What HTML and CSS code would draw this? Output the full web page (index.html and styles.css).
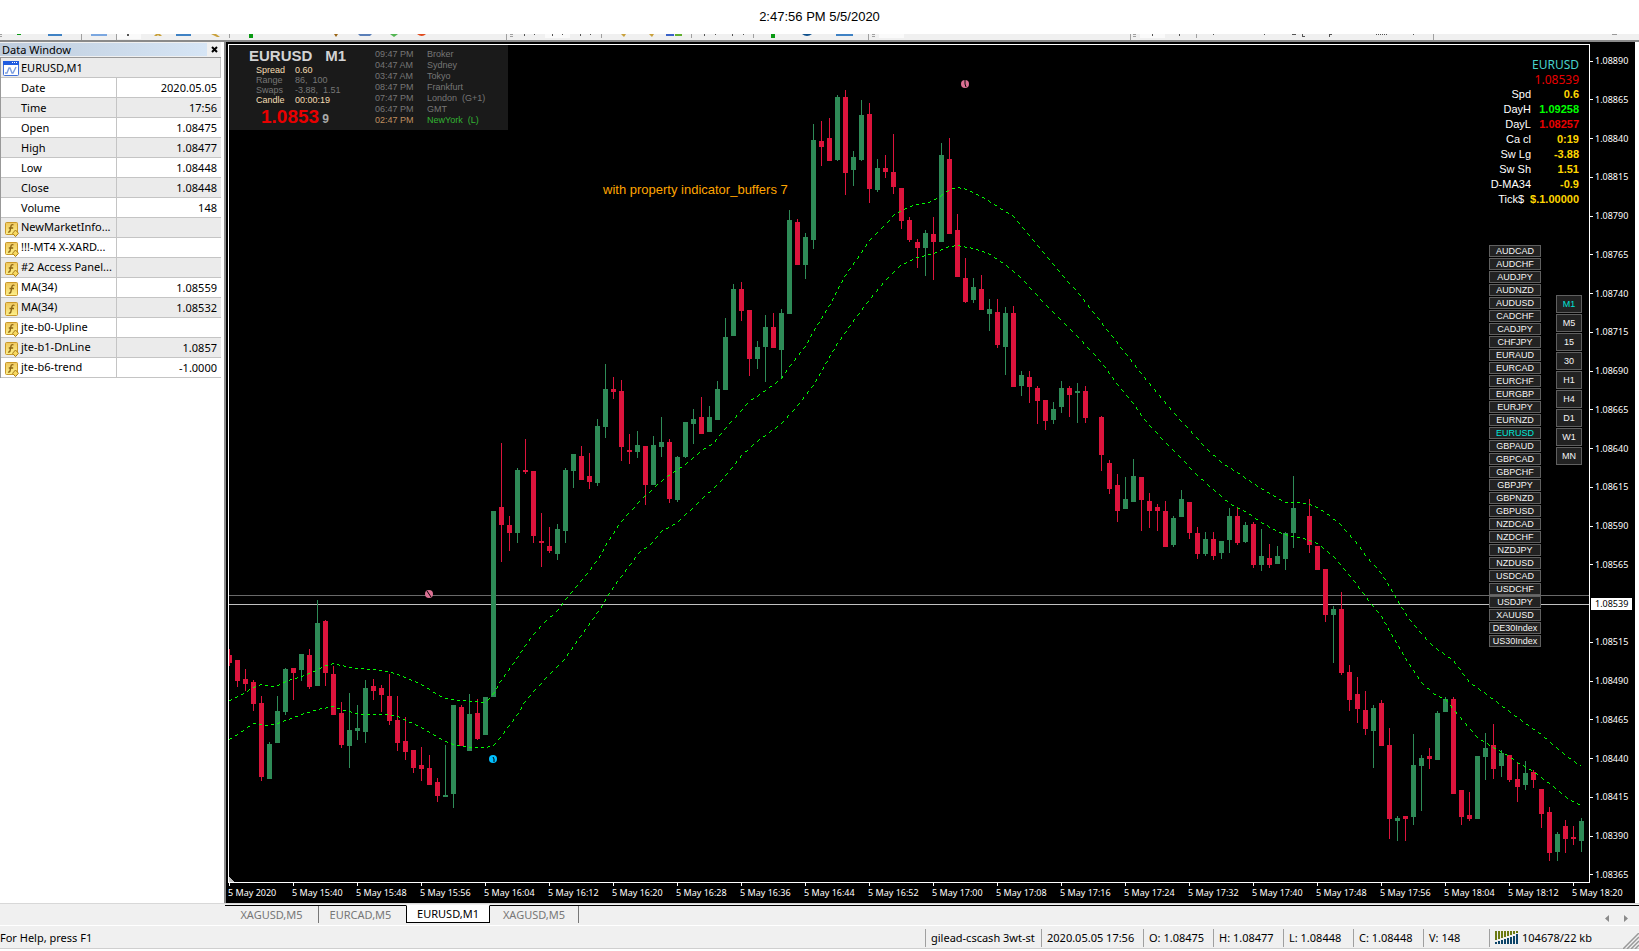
FILE: index.html
```
<!DOCTYPE html>
<html lang="en">
<head>
    <meta charset="utf-8">
    <title>EURUSD,M1</title>
    <link rel="stylesheet" href="styles.css">
</head>
<body>
    <header class="clock">2:47:56 PM 5/5/2020</header>

    <div class="toolbar">
        <svg width="1630" height="6" aria-hidden="true">
            <g fill="#a0a0a0">
                <path d="M81 0h1v6h-1zM116 0h1v6h-1zM229 0h1v4h-1zM506 0h1v6h-1zM601 0h1v4h-1zM691 0h1v4h-1zM753 0h1v4h-1zM868 0h1v6h-1zM1130 0h1v6h-1zM1196 0h1v4h-1zM1433 0h1v6h-1z"/>
                <path d="M0 0h2v1h-2zM0 2h2v1h-2zM510 0h3v1h-3zM510 2h3v1h-3zM872 0h3v1h-3zM872 2h3v1h-3zM1133 0h3v1h-3zM1133 2h3v1h-3z"/>
            </g>
            <g fill="#fafafa">
                <path d="M117 0h24v5h-24zM545 0h25v4h-25zM879 0h25v4h-25zM1140 0h25v4h-25z"/>
            </g>
            <g fill="#555">
                <path d="M127 0h2v2h-2zM524 0h1v2h-1zM534 0h1v1h-1zM552 0h1v2h-1zM562 0h1v1h-1zM580 0h1v2h-1zM590 0h1v1h-1zM704 0h1v2h-1zM715 0h1v1h-1zM732 0h1v2h-1zM743 0h1v1h-1z"/>
                <path d="M1152 0h1v2h-1zM1179 0h1v2h-1zM1213 0h1v1h-1zM1264 0h1v1h-1zM1292 0h4v1h-4zM1301 0h1v3h3v-1h-2v-2zM1329 0h3v1h-2v2h-1zM1413 0h1v1h-1z"/>
                <path d="M1376 0h1v1h-1zM1378 0h1v1h-1zM1380 0h1v1h-1zM1382 0h1v1h-1zM1384 0h1v1h-1zM1386 0h1v1h-1z"/>
            </g>
            <path d="M1612 0h5v1h-5z" fill="#999"/>
            <path d="M17 0h4v1h-4zM249 0h4v4h-4zM771 0h4v4h-4z" fill="#0a9a14"/>
            <path d="M48 0h14v2h-14zM176 0h15v2h-15zM836 0h17v2h-17z" fill="#3f82c4"/>
            <path d="M91 0h16v2h-16z" fill="#7ba7e0"/>
            <path d="M154 2l2-2h4l2 2h-3l-1-1l-1 1zM211 0h5l4 3h-3zM621 0h5l-2 3zM649 0h5l-2 3z" fill="#c9a13c"/>
            <path d="M334 0h4l-2 3z" fill="#9a6414"/>
            <path d="M358 0h14l-2 2h-10z" fill="#5a7fb8"/>
            <path d="M390 0h8l-4 3z" fill="#53b553"/>
            <path d="M417 0h9q-4 4-9 0z" fill="#e04a1c"/>
            <path d="M666 0h8v2h-8z" fill="#3a62c8"/>
            <path d="M675 0h7v2h-7z" fill="#62b030"/>
            <path d="M802 0h10q-5 4-10 0z" fill="#0d4f8b"/>
        </svg>
    </div>

    <main class="workspace">
        <section class="data-window">
            <div class="panel-title">
                <h2>Data Window</h2>
                <button class="close" aria-label="Close">
                    <svg width="7" height="7" viewBox="0 0 7 7"><path d="M1 1L6 6M6 1L1 6" stroke="#000" stroke-width="2"/></svg>
                </button>
            </div>
            <table class="values">
                <colgroup><col class="name"><col></colgroup>
                <tbody>
                    <tr>
                        <th colspan="2" scope="colgroup"><svg class="icon" width="16" height="15" viewBox="0 0 16 15"><rect x="0.5" y="0.5" width="15" height="14" rx="1" fill="#fff" stroke="#3f6fd8"/><path d="M0 0h16v4H0z" fill="#1f5be0"/><path d="M9 1h1v1H9zM11 1h1v1h-1zM13 1h1v1h-1z" fill="#fff"/><path d="M2 12h2l2-5h1l2 5h1l3-6" fill="none" stroke="#7e9fe0" stroke-width="1.4"/></svg>EURUSD,M1</th>
                    </tr>
                    <tr><th scope="row" class="plain">Date</th><td>2020.05.05</td></tr>
                    <tr><th scope="row" class="plain">Time</th><td>17:56</td></tr>
                    <tr><th scope="row" class="plain">Open</th><td>1.08475</td></tr>
                    <tr><th scope="row" class="plain">High</th><td>1.08477</td></tr>
                    <tr><th scope="row" class="plain">Low</th><td>1.08448</td></tr>
                    <tr><th scope="row" class="plain">Close</th><td>1.08448</td></tr>
                    <tr><th scope="row" class="plain">Volume</th><td>148</td></tr>
                    <tr><th scope="row"><svg class="icon" width="16" height="16"><use href="#fx-custom"/></svg>NewMarketInfo...</th><td></td></tr>
                    <tr><th scope="row"><svg class="icon" width="16" height="16"><use href="#fx-custom"/></svg>!!!-MT4 X-XARD...</th><td></td></tr>
                    <tr><th scope="row"><svg class="icon" width="16" height="16"><use href="#fx-custom"/></svg>#2 Access Panel...</th><td></td></tr>
                    <tr><th scope="row"><svg class="icon" width="16" height="16"><use href="#fx"/></svg>MA(34)</th><td>1.08559</td></tr>
                    <tr><th scope="row"><svg class="icon" width="16" height="16"><use href="#fx"/></svg>MA(34)</th><td>1.08532</td></tr>
                    <tr><th scope="row"><svg class="icon" width="16" height="16"><use href="#fx-custom"/></svg>jte-b0-Upline</th><td></td></tr>
                    <tr><th scope="row"><svg class="icon" width="16" height="16"><use href="#fx-custom"/></svg>jte-b1-DnLine</th><td>1.0857</td></tr>
                    <tr><th scope="row"><svg class="icon" width="16" height="16"><use href="#fx-custom"/></svg>jte-b6-trend</th><td>-1.0000</td></tr>
                </tbody>
            </table>
            <svg class="defs" width="0" height="0">
                <defs>
                    <linearGradient id="gold" x1="0" y1="0" x2="0" y2="1">
                        <stop offset="0" stop-color="#efc75e"/>
                        <stop offset="1" stop-color="#fdf08a"/>
                    </linearGradient>
                    <symbol id="fx" viewBox="0 0 16 16">
                        <rect x="2.5" y="1.5" width="12" height="13" rx="1" fill="url(#gold)" stroke="#c9982a"/>
                        <path d="M11.5 4.5Q9.5 3.5 9 5.5L7.800 11Q7.500 12.500 5.800 11.800M6.500 7.500h4.500" fill="none" stroke="#8a6414" stroke-width="1.300"/>
                    </symbol>
                    <symbol id="fx-custom" viewBox="0 0 16 16">
                        <rect x="2.5" y="1.5" width="12" height="12" rx="1" fill="url(#gold)" stroke="#c9982a"/>
                        <path d="M10.500 4Q8.500 3 8 5L7 10Q6.700 11.500 5 10.800M5.800 7h4.400" fill="none" stroke="#8a6414" stroke-width="1.300"/>
                        <path d="M12.500 9l3 3.300l-3 3.300l-3-3.300z" fill="#f7d860" stroke="#a87c1a"/>
                    </symbol>
                </defs>
            </svg>
        </section>

        <section class="chart-window">
            <div class="plot">
                <svg class="candles" id="candles" role="img" aria-label="EURUSD one minute candles"></svg>

                <div class="market-info">
                    <div class="quote">
                        <h1><span>EURUSD</span><span>M1</span></h1>
                        <dl>
                            <div class="lit"><dt>Spread</dt><dd>0.60</dd></div>
                            <div><dt>Range</dt><dd>86,&nbsp; 100</dd></div>
                            <div><dt>Swaps</dt><dd>-3.88,&nbsp; 1.51</dd></div>
                            <div class="lit"><dt>Candle</dt><dd>00:00:19</dd></div>
                        </dl>
                        <p class="price">1.0853<small>9</small></p>
                    </div>
                    <ul class="sessions">
                        <li><span>09:47 PM</span>Broker</li>
                        <li><span>04:47 AM</span>Sydney</li>
                        <li><span>03:47 AM</span>Tokyo</li>
                        <li><span>08:47 PM</span>Frankfurt</li>
                        <li><span>07:47 PM</span>London&nbsp; (G+1)</li>
                        <li><span>06:47 PM</span>GMT</li>
                        <li class="open"><span>02:47 PM</span>NewYork&nbsp; (L)</li>
                    </ul>
                </div>

                <p class="note">with property indicator_buffers 7</p>

                <div class="stats">
                    <p class="pair">EURUSD</p>
                    <p class="last">1.08539</p>
                    <dl>
                        <div><dt>Spd</dt><dd>0.6</dd></div>
                        <div><dt>DayH</dt><dd class="up">1.09258</dd></div>
                        <div><dt>DayL</dt><dd class="down">1.08257</dd></div>
                        <div><dt>Ca cl</dt><dd>0:19</dd></div>
                        <div><dt>Sw Lg</dt><dd>-3.88</dd></div>
                        <div><dt>Sw Sh</dt><dd>1.51</dd></div>
                        <div><dt>D-MA34</dt><dd>-0.9</dd></div>
                        <div><dt>Tick$</dt><dd>$.1.00000</dd></div>
                    </dl>
                </div>

                <div class="symbols" id="symbols"></div>
                <div class="timeframes" id="timeframes"></div>
            </div>
            <ol class="price-axis" id="priceAxis"></ol>
            <ol class="time-axis" id="timeAxis"></ol>
        </section>
    </main>

    <nav class="tabs">
        <button>XAGUSD,M5</button>
        <button>EURCAD,M5</button>
        <button class="active">EURUSD,M1</button>
        <button>XAGUSD,M5</button>
        <div class="scroll">
            <svg width="24" height="8" viewBox="0 0 24 8"><path d="M4 0v7L0 3.500zM19 0v7l4-3.500z" fill="#8a8a8a"/></svg>
        </div>
    </nav>

    <footer class="status">
        <span class="help">For Help, press F1</span>
        <span class="cell account">gilead-cscash 3wt-st</span>
        <span class="cell date">2020.05.05 17:56</span>
        <span class="cell">O: 1.08475</span>
        <span class="cell">H: 1.08477</span>
        <span class="cell">L: 1.08448</span>
        <span class="cell">C: 1.08448</span>
        <span class="cell volume">V: 148</span>
        <span class="cell traffic">
            <svg width="23" height="13" viewBox="0 0 23 13">
                <path d="M0 0h2v9H0zM3 0h2v8H3zM6 0h2v7H6zM9 0h2v6H9zM12 0h2v5h-2zM15 0h2v4h-2zM18 0h2v3h-2zM21 0h2v2h-2z" fill="#6b7a12"/>
                <path d="M0 11h2v2H0zM3 10h2v3H3zM6 9h2v4H6zM9 8h2v5H9zM12 7h2v6h-2zM15 6h2v7h-2zM18 5h2v8h-2zM21 3h2v10h-2z" fill="#0c4468"/>
            </svg>
            104678/22 kb
        </span>
        <svg class="grip" width="16" height="16" viewBox="0 0 16 16"><path d="M0 16L16 0M4 16L16 4M8 16L16 8M12 16L16 12" stroke="#999" stroke-width="1.500"/></svg>
    </footer>

    <script src="chart.js"></script>
</body>
</html>
```
FILE: styles.css
```
* {
    box-sizing: border-box;
}
body {
    margin: 0;
    min-height: 100vh;
    display: flex;
    flex-direction: column;
    background-color: #f0f0f0;
    font-family: "Noto Sans", sans-serif;
    font-size: 11px;
    color: #000;
}
h1, h2, p, dl, dd, ul, ol {
    margin: 0;
    padding: 0;
    list-style: none;
}
button {
    font-family: inherit;
    padding: 0;
    cursor: pointer;
}
.clock {
    height: 34px;
    background-color: #fff;
    font: 13px/34px "Liberation Sans", Arial, sans-serif;
    text-align: center;
}
.toolbar {
    height: 8px;
    border-bottom: 2px solid #8a8a8a;
    overflow: hidden;
}
.toolbar svg {
    display: block;
}
.workspace {
    flex: 1;
    display: flex;
    background-color: #fff;
}

/* data window */
.data-window {
    width: 226px;
    border-right: 2px solid #8a8a8a;
    background-color: #fff;
    padding-right: 3px;
}
.panel-title {
    display: flex;
    justify-content: space-between;
    height: 16px;
    padding: 1px 0;
    background-color: #f0f0f0;
    border-bottom: 1px solid #999;
}
.panel-title h2 {
    width: 207px;
    padding-left: 2px;
    background: linear-gradient(to right, #bfcddd, #d6e5f5);
    font-size: 11px;
    font-weight: normal;
    line-height: 13px;
}
.close {
    width: 10px;
    display: flex;
    align-items: center;
    border: none;
    background: none;
}
.values {
    width: 100%;
    border-left: 1px solid #999;
    border-collapse: separate;
    border-spacing: 0;
    table-layout: fixed;
}
.values .name {
    width: 116px;
}
.values th, .values td {
    height: 20px;
    padding: 0;
    border-bottom: 1px solid #c4c4c4;
    line-height: 18px;
    font-weight: normal;
    white-space: nowrap;
}
.values th {
    text-align: left;
    border-right: 1px solid #c4c4c4;
}
.values td {
    padding-right: 4px;
    text-align: right;
}
.values tr:nth-child(odd) {
    background-color: #ebebeb;
}
.values th.plain {
    padding-left: 20px;
}
.values .icon {
    margin: 0 2px;
    vertical-align: middle;
}
.defs {
    display: block;
}

/* chart */
.chart-window {
    flex: 1;
    display: grid;
    grid-template-columns: 1fr 45px;
    grid-template-rows: 1fr 20px;
    margin-right: 4px;
    padding: 2px 0 0 2px;
    background-color: #000;
    overflow: hidden;
    color: #fff;
}
.plot {
    position: relative;
    border: 1px solid #fff;
    font-family: "Liberation Sans", Arial, sans-serif;
}
.candles {
    position: absolute;
    width: 100%;
    height: 100%;
}
.market-info {
    position: absolute;
    top: 0;
    left: 0;
    width: 279px;
    height: 85px;
    display: flex;
    background-color: #1a1a1a;
    color: #767676;
    font-size: 9px;
    line-height: 10px;
}
.quote {
    width: 146px;
    padding: 2px 0 0 20px;
}
.quote h1 {
    display: flex;
    gap: 13px;
    font-size: 15px;
    line-height: 18px;
    color: #d3d3d3;
}
.quote dl {
    padding-left: 7px;
}
.quote dl div {
    display: flex;
}
.quote dt {
    width: 39px;
}
.lit {
    color: #f5deb3;
}
.quote .price {
    padding-left: 12px;
    color: #e80000;
    font-size: 19px;
    font-weight: bold;
    line-height: 23px;
}
.price small {
    margin-left: 3px;
    color: #a9a9a9;
    font-size: 12px;
}
.sessions {
    padding-top: 4px;
    line-height: 11px;
}
.sessions li {
    display: flex;
}
.sessions span {
    width: 52px;
}
.sessions .open {
    color: #32b432;
}
.sessions .open span {
    color: #c09060;
}
.note {
    position: absolute;
    top: 137px;
    left: 374px;
    color: #ffa500;
    font-size: 13px;
    line-height: 16px;
}
.stats {
    position: absolute;
    top: 12px;
    right: 10px;
    font-size: 11px;
    line-height: 15px;
    text-align: right;
}
.stats .pair, .stats .last {
    font-family: "Noto Sans", sans-serif;
    font-size: 12px;
    line-height: 15px;
}
.pair {
    color: #48d1cc;
}
.last {
    color: #e80000;
}
.stats dl div {
    display: flex;
    justify-content: flex-end;
    gap: 6px;
}
.stats dd {
    min-width: 42px;
    color: #ffd700;
    font-weight: bold;
}
.stats dd.up {
    color: #00ff00;
}
.stats dd.down {
    color: #e80000;
}
.symbols, .timeframes {
    position: absolute;
    display: grid;
    gap: 1px;
}
.symbols {
    top: 200px;
    right: 48px;
    width: 52px;
    grid-auto-rows: 12px;
}
.timeframes {
    top: 250px;
    right: 7px;
    width: 26px;
    grid-auto-rows: 18px;
}
.symbols button, .timeframes button {
    border: 1px solid #606060;
    background-color: #222;
    color: #f5f5f5;
    font-size: 9px;
    line-height: 10px;
    white-space: nowrap;
}
.symbols button.active, .timeframes button.active {
    color: #00e5d8;
}
.price-axis {
    display: flex;
    flex-direction: column;
    justify-content: space-between;
    padding: 11px 0 2px;
    font-size: 9px;
    line-height: 12px;
}
.price-axis li {
    display: flex;
    align-items: center;
    gap: 2px;
}
.price-axis li::before {
    content: "";
    width: 3px;
    height: 1px;
    background-color: #fff;
}
.price-axis .current {
    width: 41px;
    margin-left: 1px;
    padding-left: 4px;
    background-color: #fff;
    color: #000;
}
.price-axis .current::before {
    display: none;
}
.time-axis {
    grid-column: 1 / 3;
    display: grid;
    grid-template-columns: repeat(22, 64px);
    font-size: 9px;
    line-height: 13px;
    white-space: nowrap;
}
.time-axis li::before {
    content: "";
    display: block;
    width: 1px;
    height: 3px;
    margin-left: 1px;
    background-color: #fff;
}

/* chart tabs */
.tabs {
    display: flex;
    height: 23px;
    padding: 0 0 2px 225px;
    border-top: 1px solid #d8d8d8;
    border-bottom: 1px solid #fff;
    background: linear-gradient(#000, #000) 225px 1px / 100% 1px no-repeat;
}
.tabs button {
    width: 94px;
    margin-top: 2px;
    border: none;
    background: none;
    color: #777;
    font-size: 11px;
    line-height: 16px;
    border-right: 1px solid #777;
}
.tabs button:nth-child(2) {
    width: 87px;
    padding-right: 4px;
    border-right: none;
}
.tabs button.active {
    width: 84px;
    margin-top: 1px;
    border: 1px solid #000;
    border-top-color: #fff;
    background-color: #fff;
    color: #000;
}
.tabs button:nth-child(4) {
    width: 89px;
}
.scroll {
    margin-left: auto;
    padding: 7px 10px 0 0;
}

/* status bar */
.status {
    display: flex;
    align-items: center;
    height: 25px;
    border-bottom: 2px solid #fff;
    box-shadow: inset 0 -1px #cfcfcf;
    line-height: 18px;
    white-space: nowrap;
}
.help {
    flex: 1;
}
.cell {
    width: 70px;
    height: 18px;
    padding-left: 5px;
    border-left: 1px solid #a0a0a0;
    overflow: hidden;
}
.cell.account {
    width: 116px;
}
.cell.date {
    width: 102px;
}
.cell.volume {
    width: 66px;
}
.cell.traffic {
    display: flex;
    align-items: center;
    gap: 4px;
    width: 134px;
}
.grip {
    align-self: flex-end;
}
```
FILE: chart.js
```
// one row per minute: [colour, high, body top, body bottom, low], null = no ticks
const candles = [
    ["r",649,655,663,666],["r",660,660,681,687],["r",669,679,684,691],["r",680,682,704,711],["r",696,703,777,781],
    ["g",742,744,779,779],["g",696,711,743,743],["g",668,669,712,715],["r",668,668,673,700],["g",654,654,670,681],
    ["r",649,655,687,689],["g",600,623,686,686],["r",620,621,673,686],["r",666,674,715,715],["r",702,713,745,748],
    ["g",693,730,746,768],["g",705,728,731,740],["g",680,688,732,743],["r",679,686,691,700],["r",685,688,695,712],
    ["r",674,696,721,725],["r",696,720,743,751],["r",717,741,752,760],["r",750,750,768,773],["r",747,765,769,781],
    ["r",755,768,785,785],["r",778,782,796,802],["g",745,795,797,797],["g",705,705,794,808],["r",705,707,746,746],
    ["g",694,714,751,751],["r",699,713,739,740],["g",697,697,735,735],["g",511,511,697,697],["r",443,507,525,562],
    ["r",516,525,533,551],["g",468,470,533,543],["r",439,470,472,474],["r",471,471,536,543],["r",513,541,543,567],
    ["r",527,546,551,553],["g",524,529,554,560],["g",468,470,531,543],["g",454,454,471,488],["r",446,456,480,480],
    ["r",453,476,482,489],["g",419,426,483,486],["g",364,389,427,438],["r",377,389,392,399],["r",380,391,447,461],
    ["r",434,450,452,464],["g",431,445,452,458],["r",446,446,485,505],["g",436,445,485,485],["g",417,442,447,457],
    ["r",439,442,499,503],["g",456,457,500,502],["g",422,422,457,458],["g",409,419,424,444],["r",397,417,434,434],
    ["g",406,417,432,432],["g",381,389,420,420],["g",318,337,390,390],["g",284,289,336,336],["r",282,289,311,321],
    ["r",310,310,359,376],["g",341,347,359,369],["g",315,327,347,382],["r",313,327,348,348],["g",309,313,350,379],
    ["g",210,220,314,314],["r",219,222,265,265],["g",233,237,265,279],["g",124,140,240,249],["r",121,141,147,166],
    ["r",118,138,161,161],["g",95,97,160,161],["r",90,97,173,195],["g",151,157,170,186],["g",100,115,160,161],
    ["r",103,114,189,203],["g",159,168,190,192],["r",155,168,172,178],["r",134,172,187,194],["r",188,188,221,229],
    ["r",217,220,240,242],["r",239,242,248,268],["g",230,233,248,276],["r",217,234,242,280],["g",143,155,242,242],
    ["r",138,159,234,234],["r",214,230,277,277],["r",258,278,302,303],["g",278,287,300,303],["r",275,289,310,310],
    ["g",299,309,314,331],["r",299,312,345,348],["g",307,313,347,375],["r",306,313,387,387],["g",371,375,386,396],
    ["r",371,377,387,403],["r",386,388,401,424],["r",400,400,421,430],["g",402,409,420,424],["g",381,388,407,413],
    ["r",386,388,395,417],["g",383,391,393,423],["r",386,391,418,423],null,["r",416,417,455,471],
    ["r",460,463,489,494],["r",474,485,511,522],["g",477,499,509,509],["g",459,476,502,502],["r",477,477,500,531],
    ["r",493,501,511,528],["r",504,507,511,531],["r",501,511,547,547],["g",516,518,545,547],["g",490,499,517,517],
    ["r",502,502,533,539],["r",527,533,554,559],["g",532,539,554,556],["r",532,539,556,560],["g",541,541,553,559],
    ["g",508,516,540,553],["r",507,516,543,545],["g",522,525,542,543],["r",522,524,565,568],["g",529,556,565,571],
    ["r",544,558,565,568],["g",546,556,564,564],["g",532,533,559,570],["g",476,508,533,548],null,
    ["r",499,516,545,553],["r",546,546,570,570],["r",569,569,615,622],["g",606,609,615,663],["r",592,609,673,675],
    ["r",665,672,700,711],["r",677,694,709,723],["r",691,710,729,735],["g",705,708,731,768],["r",700,703,746,746],
    ["r",728,745,819,839],["g",816,818,821,841],["r",816,816,819,841],["g",734,765,817,825],["g",755,758,766,811],
    ["r",748,756,759,769],["g",711,713,760,760],["g",697,699,712,712],["r",697,699,794,794],["r",790,790,817,825],
    ["r",792,815,819,821],["g",756,756,819,819],["g",733,748,757,780],["r",724,745,769,779],["g",750,753,766,777],
    ["r",755,755,780,782],["r",762,779,787,802],["g",761,773,785,790],["r",770,772,780,788],["r",789,789,814,828],
    ["r",807,812,853,861],["g",832,834,852,861],["r",820,826,839,853],["r",826,837,839,845],["g",818,821,841,852]
];

const maHigh = "229,700 240,695 253,687 261,684 270,686 277,685 285,681 301,676 309,673 317,669 325,665 333,663 341,665 357,668 373,669 389,671 397,674 405,677 421,684 437,694 445,698 461,700 477,701 485,702 493,693 500,681 508,670 517,657 525,645 533,634 545,621 557,610 570,593 580,581 590,569 598,558 607,542 620,522 632,509 642,498 654,487 667,476 685,464 701,450 713,443 724,429 740,411 750,400 758,395 776,382 781,378 789,366 805,346 813,331 829,305 837,289 845,275 861,252 869,240 885,224 893,215 901,210 909,206 917,204 925,203 933,200 941,195 949,189 957,187 963,188 973,192 981,196 997,206 1013,216 1029,235 1045,254 1061,274 1079,294 1133,363 1143,376 1157,393 1173,412 1197,438 1205,447 1221,462 1237,472 1253,483 1269,493 1285,502 1301,502 1309,504 1317,507 1325,512 1341,525 1359,546 1365,555 1373,564 1381,573 1389,586 1397,600 1405,613 1413,624 1429,642 1437,649 1453,660 1461,671 1469,682 1485,693 1501,705 1525,723 1541,734 1565,755 1581,766";
const maLow = "229,739 240,732 253,723 261,724 269,725 280,722 301,714 317,709 333,706 341,709 357,713 365,714 385,714 397,716 421,727 445,741 453,744 469,747 485,747 493,745 503,733 517,714 524,702 533,691 550,673 563,660 580,636 600,608 608,594 620,577 638,553 652,542 661,531 677,522 701,499 717,484 727,473 742,454 758,440 773,429 781,423 793,410 813,385 830,355 837,343 857,315 869,299 885,280 900,265 917,257 933,253 941,249 949,246 957,245 973,248 988,253 1003,263 1020,277 1047,306 1077,336 1102,363 1117,384 1133,403 1143,418 1165,442 1181,458 1197,475 1213,489 1229,503 1245,511 1261,522 1277,531 1290,536 1301,537 1317,543 1333,556 1357,585 1365,596 1381,616 1397,644 1405,658 1421,682 1433,693 1445,699 1453,709 1469,728 1477,737 1493,747 1509,756 1517,762 1533,771 1549,783 1567,798 1581,805";

const colours = { r: "#dc143c", g: "#2e8b57" };
const left = 229;
const top0 = 45;
const step = 8;

let out = `<g transform="translate(${-left} ${-top0})" shape-rendering="crispEdges">`;
out += `<rect x="229" y="595" width="3000" height="1" fill="#696969"/>`;
out += `<rect x="229" y="604" width="3000" height="1" fill="#c0c0c0"/>`;
candles.forEach((c, i) => {
    if (!c) return;
    const [k, high, a, b, low] = c;
    const x = left + i * step;
    out += `<path fill="${colours[k]}" d="M${x} ${high}h1V${low}h-1zM${x - 2} ${a}h5V${b}h-5z"/>`;
});

// dashed averages, drawn pixel by pixel: three on, three off
function dashed(points) {
    const p = points.split(" ").map(s => s.split(",").map(Number));
    let n = 0;
    let d = "";
    for (let i = 1; i < p.length; i++) {
        const [x0, y0] = p[i - 1];
        const [x1, y1] = p[i];
        const len = Math.max(Math.abs(x1 - x0), Math.abs(y1 - y0));
        for (let s = 0; s < len; s++, n++) {
            if (n % 6 > 2) continue;
            const x = Math.round(x0 + (x1 - x0) * s / len);
            const y = Math.round(y0 + (y1 - y0) * s / len);
            d += `M${x} ${y}h1v1h-1z`;
        }
    }
    return `<path fill="#00ff00" d="${d}"/>`;
}
out += dashed(maHigh) + dashed(maLow);
out += `<path d="M229 877l5 5h-5z" fill="#c0c0c0"/></g>`;

function marker(x, y, fill, slit) {
    return `<g transform="translate(${x - left} ${y - top0})"><circle r="4" fill="${fill}"/><path d="${slit}" stroke="#000" fill="none"/></g>`;
}
out += marker(429, 594, "#db7093", "M-2 -3L0 0L2 3");
out += marker(965, 84, "#db7093", "M0 -4V0L1 3");
out += marker(493, 759, "#00bfff", "M0 -2L1 0V3");
document.getElementById("candles").innerHTML = out;

const symbols = "AUDCAD AUDCHF AUDJPY AUDNZD AUDUSD CADCHF CADJPY CHFJPY EURAUD EURCAD EURCHF EURGBP EURJPY EURNZD EURUSD GBPAUD GBPCAD GBPCHF GBPJPY GBPNZD GBPUSD NZDCAD NZDCHF NZDJPY NZDUSD USDCAD USDCHF USDJPY XAUUSD DE30Index US30Index".split(" ");
const frames = "M1 M5 15 30 H1 H4 D1 W1 MN".split(" ");

function fillButtons(id, names, active) {
    document.getElementById(id).innerHTML = names
        .map(n => `<button${n === active ? ' class="active"' : ""}>${n}</button>`)
        .join("");
}
fillButtons("symbols", symbols, "EURUSD");
fillButtons("timeframes", frames, "M1");

let prices = "";
for (let i = 0; i < 22; i++) {
    prices += i === 14
        ? `<li class="current">1.08539</li>`
        : `<li>${((108890 - i * 25) / 100000).toFixed(5)}</li>`;
}
document.getElementById("priceAxis").innerHTML = prices;

let times = "<li>5 May 2020</li>";
for (let i = 1; i < 22; i++) {
    const m = 15 * 60 + 32 + i * 8;
    times += `<li>5 May ${Math.floor(m / 60)}:${String(m % 60).padStart(2, "0")}</li>`;
}
document.getElementById("timeAxis").innerHTML = times;
```
